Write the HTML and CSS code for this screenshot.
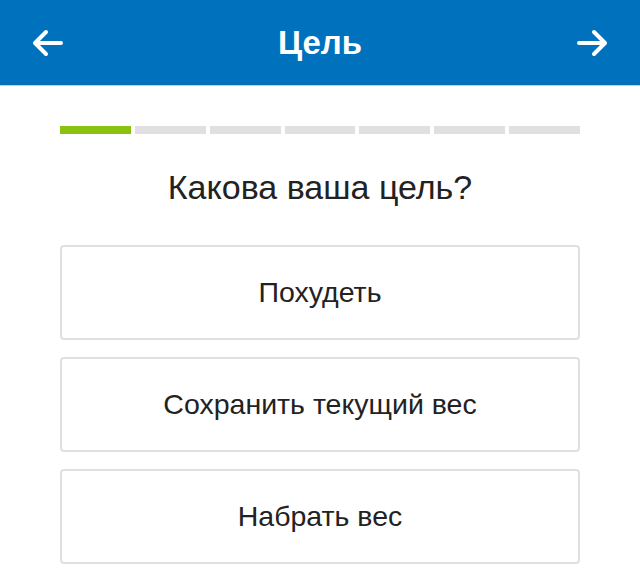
FILE: index.html
```html
<!DOCTYPE html>
<html lang="ru">
<head>
    <meta charset="UTF-8">
    <meta name="viewport" content="width=device-width, initial-scale=1.0">
    <title>Цель</title>
    <link rel="stylesheet" href="styles.css">
</head>
<body>
    <header class="topbar">
        <button class="nav-btn">
            <svg width="32" height="28" viewBox="0 0 32 28"><path d="M29 14H4M14 3L3 14l11 11" fill="none" stroke="#fff" stroke-width="4" stroke-linecap="round" stroke-linejoin="round"/></svg>
        </button>
        <h1 class="topbar-title">Цель</h1>
        <button class="nav-btn">
            <svg width="32" height="28" viewBox="0 0 32 28"><path d="M3 14h25M18 3l11 11-11 11" fill="none" stroke="#fff" stroke-width="4" stroke-linecap="round" stroke-linejoin="round"/></svg>
        </button>
    </header>
    <main class="content">
        <div class="progress">
            <span class="step done"></span>
            <span class="step"></span>
            <span class="step"></span>
            <span class="step"></span>
            <span class="step"></span>
            <span class="step"></span>
            <span class="step"></span>
        </div>
        <h2 class="question">Какова ваша цель?</h2>
        <div class="options">
            <button class="option">Похудеть</button>
            <button class="option">Сохранить текущий вес</button>
            <button class="option">Набрать вес</button>
        </div>
    </main>
</body>
</html>
```

FILE: styles.css
```css
body {
    font-family: "Liberation Sans", Arial, sans-serif;
    margin: 0;
    padding: 0;
    background-color: #fff;
    color: #222;
}

.topbar {
    height: 86px;
    display: flex;
    justify-content: space-between;
    align-items: center;
    padding: 0 24px;
    background-color: #0071bd;
    border-bottom: 1px solid #c9cdd0;
    box-sizing: border-box;
}

.nav-btn {
    background: none;
    border: none;
    padding: 8px;
    display: flex;
    cursor: pointer;
}

.topbar-title {
    margin: 0;
    font-size: 33px;
    font-weight: bold;
    color: #fff;
}

.content {
    padding: 40px 60px 20px;
}

.progress {
    display: flex;
    gap: 4px;
}

.step {
    flex: 1;
    height: 8px;
    background-color: #e0e0e0;
}

.step.done {
    background-color: #8bc10f;
}

.question {
    margin: 33px 0 38px;
    font-size: 34px;
    line-height: 40px;
    font-weight: normal;
    text-align: center;
    color: #222;
}

.options {
    display: flex;
    flex-direction: column;
    gap: 17px;
}

.option {
    height: 95px;
    background-color: #fff;
    border: 2px solid #e0e0e0;
    border-radius: 4px;
    font-family: inherit;
    font-size: 28.5px;
    color: #222;
    cursor: pointer;
}
```
